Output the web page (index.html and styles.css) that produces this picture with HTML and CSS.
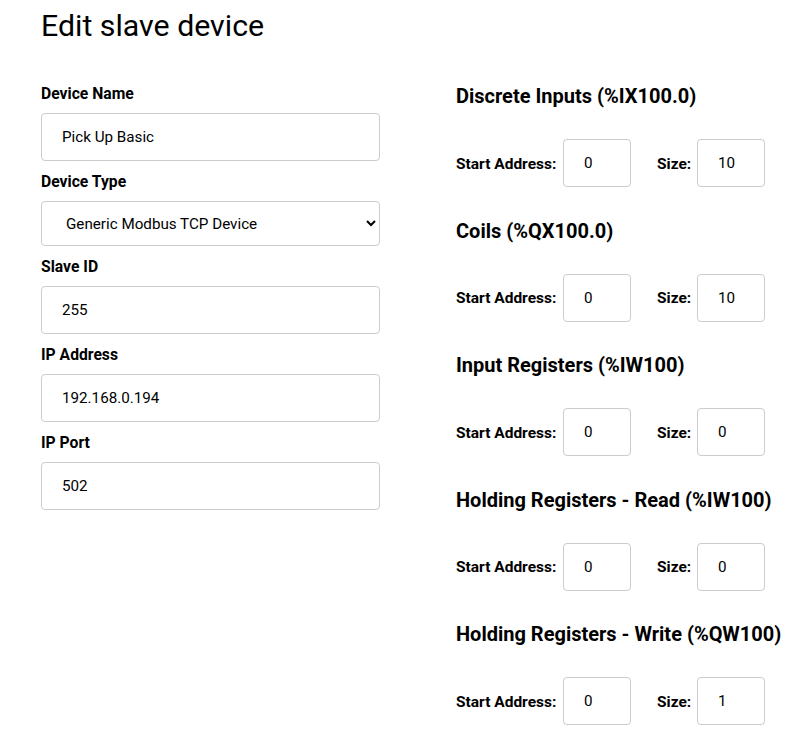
FILE: index.html
```html
<!DOCTYPE html>
<html>
<head>
<meta charset="utf-8">
<link rel="stylesheet" href="styles.css">
</head>
<body>
<div class="page">
  <h1 class="title">Edit slave device</h1>
  <div class="columns">
    <div class="left">
      <div class="field">
        <label class="label">Device Name</label>
        <input class="input" type="text" value="Pick Up Basic">
      </div>
      <div class="field">
        <label class="label">Device Type</label>
        <select class="select">
          <option>Generic Modbus TCP Device</option>
        </select>
      </div>
      <div class="field">
        <label class="label">Slave ID</label>
        <input class="input" type="text" value="255">
      </div>
      <div class="field">
        <label class="label">IP Address</label>
        <input class="input" type="text" value="192.168.0.194">
      </div>
      <div class="field">
        <label class="label">IP Port</label>
        <input class="input" type="text" value="502">
      </div>
    </div>
    <div class="right">
      <div class="section">
        <h2 class="heading">Discrete Inputs (%IX100.0)</h2>
        <div class="row">
          <label class="rlabel addr">Start Address:</label>
          <input class="small" type="text" value="0">
          <label class="rlabel size">Size:</label>
          <input class="small" type="text" value="10">
        </div>
      </div>
      <div class="section">
        <h2 class="heading">Coils (%QX100.0)</h2>
        <div class="row">
          <label class="rlabel addr">Start Address:</label>
          <input class="small" type="text" value="0">
          <label class="rlabel size">Size:</label>
          <input class="small" type="text" value="10">
        </div>
      </div>
      <div class="section">
        <h2 class="heading">Input Registers (%IW100)</h2>
        <div class="row">
          <label class="rlabel addr">Start Address:</label>
          <input class="small" type="text" value="0">
          <label class="rlabel size">Size:</label>
          <input class="small" type="text" value="0">
        </div>
      </div>
      <div class="section">
        <h2 class="heading">Holding Registers - Read (%IW100)</h2>
        <div class="row">
          <label class="rlabel addr">Start Address:</label>
          <input class="small" type="text" value="0">
          <label class="rlabel size">Size:</label>
          <input class="small" type="text" value="0">
        </div>
      </div>
      <div class="section">
        <h2 class="heading">Holding Registers - Write (%QW100)</h2>
        <div class="row">
          <label class="rlabel addr">Start Address:</label>
          <input class="small" type="text" value="0">
          <label class="rlabel size">Size:</label>
          <input class="small" type="text" value="1">
        </div>
      </div>
    </div>
  </div>
</div>
</body>
</html>
```
FILE: styles.css
```css
html, body {
  margin: 0;
  padding: 0;
  background: #fff;
  font-family: Roboto, "Liberation Sans", Arial, sans-serif;
  color: #000;
}
.page {
  padding: 0 0 0 41px;
}
.title {
  margin: 0;
  padding-top: 8px;
  height: 75px;
  box-sizing: border-box;
  font-size: 30.3px;
  line-height: 36px;
  font-weight: 400;
}
.columns {
  display: grid;
  grid-template-columns: 339px 1fr;
  column-gap: 76px;
}
.left {
  display: flex;
  flex-direction: column;
}
.field {
  display: flex;
  flex-direction: column;
}
.label {
  display: block;
  font-size: 15.7px;
  font-weight: 700;
  line-height: 20px;
  margin: 11px 0 9px;
}
.field:first-child .label {
  margin-top: 9px;
  margin-bottom: 9px;
}
.input, .select {
  box-sizing: border-box;
  width: 339px;
  height: 48px;
  border: 1px solid #ccc;
  border-radius: 4px;
  padding: 0 20px;
  font-family: Roboto, "Liberation Sans", Arial, sans-serif;
  font-size: 15.2px;
  color: #000;
  background: #fff;
  outline: none;
}
.select {
  height: 45px;
  padding: 0 16px 0 20px;
}
.right {
  display: flex;
  flex-direction: column;
  padding-top: 9px;
}
.section {
  display: flex;
  flex-direction: column;
}
.heading {
  margin: 0;
  font-size: 20px;
  line-height: 24px;
  font-weight: 700;
}
.row {
  display: flex;
  align-items: center;
  margin: 31px 0 31.5px;
}
.rlabel {
  font-size: 15.5px;
  font-weight: 700;
  line-height: 20px;
  white-space: nowrap;
  padding-top: 1px;
}
.addr {
  width: 107px;
}
.size {
  width: 40px;
  margin-left: 26px;
}
.small {
  box-sizing: border-box;
  width: 68px;
  height: 48px;
  border: 1px solid #ccc;
  border-radius: 4px;
  padding: 0 20px;
  font-family: Roboto, "Liberation Sans", Arial, sans-serif;
  font-size: 15.2px;
  color: #000;
  background: #fff;
  outline: none;
}
```
